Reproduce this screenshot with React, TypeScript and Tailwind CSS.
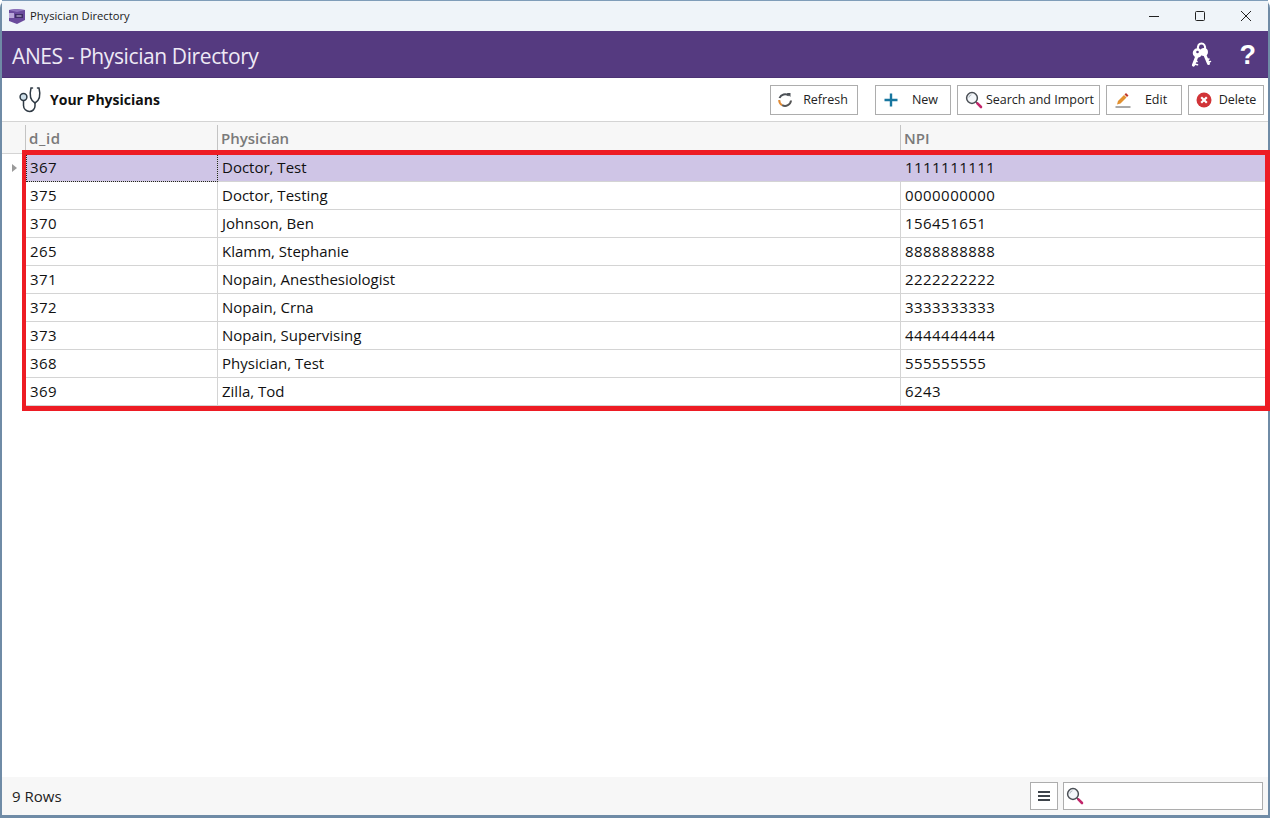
import React from "react";

const rows = [
  ["367", "Doctor, Test", "1111111111"],
  ["375", "Doctor, Testing", "0000000000"],
  ["370", "Johnson, Ben", "156451651"],
  ["265", "Klamm, Stephanie", "8888888888"],
  ["371", "Nopain, Anesthesiologist", "2222222222"],
  ["372", "Nopain, Crna", "3333333333"],
  ["373", "Nopain, Supervising", "4444444444"],
  ["368", "Physician, Test", "555555555"],
  ["369", "Zilla, Tod", "6243"],
];

function Lens({ size = 18 }: { size?: number }) {
  return (
    <svg width={size} height={size} viewBox="0 0 18 18" fill="none">
      <circle cx="7" cy="7" r="5.4" stroke="#4a4f55" strokeWidth="1.5" fill="#f4f7fa" />
      <path d="M3.8 6.5A3.4 3.4 0 0 1 6.4 3.8" stroke="#a9b2ba" strokeWidth="1" />
      <path d="M11 11l1.2 1.2" stroke="#4a4f55" strokeWidth="1.6" />
      <path d="M12.4 12.4l3.6 3.6" stroke="#c2276b" strokeWidth="2.6" strokeLinecap="round" />
    </svg>
  );
}

function Btn({ w, gap, icon, label }: { w: string; gap: string; icon: React.ReactNode; label: string }) {
  return (
    <div className={`h-[30px] ${w} ${gap} border border-[#adadad] bg-white flex items-center justify-center text-[12.5px] text-[#222] shrink-0`}>
      {icon}
      <span className="pt-[1px]">{label}</span>
    </div>
  );
}

export default function App() {
  return (
    <div
      className="relative w-[1270px] h-[818px] overflow-hidden text-black"
      style={{ fontFamily: '"Open Sans", "Noto Sans", sans-serif' }}
    >
      <div className="w-full h-full bg-white flex flex-col border-l-2 border-r-2 border-b-[3px] border-[#6f8ba6] rounded-t-lg">
        {/* title bar */}
        <div className="h-[31px] shrink-0 bg-[#eff4f9] border-t border-[#7f9db9] flex items-center">
          <svg width="18" height="18" viewBox="0 0 18 18" className="ml-[6px]">
            <path d="M1 3l7-1 9 1v10l-8 4-8-3z" fill="#6a4a9c" />
            <path d="M1 3l7-1 9 1-8 2z" fill="#8f74bd" />
            <path d="M1 6h5v5H1z" fill="#b9a6d8" />
            <path d="M7 7h8v4H7z" fill="#3f2c66" />
            <path d="M8.500 8.500h5v1h-5z" fill="#d9d0ea" />
          </svg>
          <span className="ml-[4px] text-[11.2px] text-[#1a1a1a]">Physician Directory</span>
          <div className="ml-auto flex items-center">
            <div className="w-[46px] flex justify-center">
              <svg width="12" height="12" viewBox="0 0 12 12"><path d="M1 6.500h10" stroke="#222" strokeWidth="1" /></svg>
            </div>
            <div className="w-[46px] flex justify-center">
              <svg width="12" height="12" viewBox="0 0 12 12"><rect x="1.500" y="1.500" width="9" height="9" rx="1" fill="none" stroke="#222" strokeWidth="1" /></svg>
            </div>
            <div className="w-[45px] flex justify-center">
              <svg width="12" height="12" viewBox="0 0 12 12"><path d="M1 1l10 10M11 1L1 11" stroke="#222" strokeWidth="1" /></svg>
            </div>
          </div>
        </div>

        {/* header */}
        <div className="h-[47px] shrink-0 bg-[#553a80] flex items-center pl-[10px] pr-[12px] border-b border-[#4c3374]">
          <span className="text-[21px] text-[#eee9f5] tracking-[-0.4px] pt-[6px]">ANES - Physician Directory</span>
          <div className="ml-auto flex items-center gap-[28px] pt-[2px]">
            <svg width="22" height="26" viewBox="0 0 22 26" fill="none" stroke="#fff" strokeLinecap="round" strokeLinejoin="round">
              <path d="M8 8C7.500 3 9 1.500 11.500 1.500S15.500 3.500 15 7" strokeWidth="2" />
              <circle cx="14" cy="10" r="3.200" fill="#fff" strokeWidth="1.500" />
              <path d="M14.500 12l4 9.500" strokeWidth="3" />
              <path d="M18.500 20l2-.5M17.500 17.500l1.500-.5" strokeWidth="1.500" />
              <circle cx="7.500" cy="11" r="4" fill="#fff" strokeWidth="1.500" />
              <circle cx="7.500" cy="10" r="1.300" fill="#553a80" stroke="none" />
              <path d="M7 14L3.500 23" strokeWidth="3.200" />
              <path d="M4 22l3.500.8M5 19l2 .6" strokeWidth="1.600" />
            </svg>
            <span className="text-[27px] font-bold leading-none text-white" style={{ fontFamily: '"Liberation Sans", sans-serif' }}>?</span>
          </div>
        </div>

        {/* toolbar */}
        <div className="h-[44px] shrink-0 bg-white border-b border-[#d4d4d4] flex items-center pl-[17px] pr-[4px]">
          <svg width="24" height="28" viewBox="0 0 24 28" fill="none" stroke="#2f3a44" strokeWidth="1.500" strokeLinecap="round">
            <path d="M13.500 2h-1.500C10.500 8 10.500 14 16 17C21.500 14 21.500 8 20 2h-1.500" />
            <path d="M16 17v3c0 3-2.500 5.500-5.500 5.500S4.500 23 4.500 19.500V15" />
            <circle cx="4.500" cy="11" r="3.400" fill="#cfe0ea" />
          </svg>
          <span className="ml-[7px] text-[14px] font-bold text-[#111]">Your Physicians</span>
          <div className="ml-auto flex items-center">
            <Btn w="w-[88px] pr-[3px]" gap="gap-[10px]" label="Refresh" icon={
              <svg width="16" height="16" viewBox="0 0 16 16" fill="none" strokeWidth="2">
                <path d="M11.900 3.600A6 6 0 0 0 2.500 6" stroke="#4b5056" />
                <path d="M2.200 8a6 6 0 0 0 3 5.200" stroke="#e08a35" />
                <path d="M5.200 13.200A6 6 0 0 0 14 8.500" stroke="#555" />
                <path d="M9.500 1l4 0 0 4z" fill="#4b5056" stroke="none" />
              </svg>
            } />
            <div className="w-[17px]" />
            <Btn w="w-[76px] pr-[4px]" gap="gap-[14px]" label="New" icon={
              <svg width="14" height="14" viewBox="0 0 14 14"><path d="M7 0.500v13M0.500 7h13" stroke="#17769f" strokeWidth="2.400" /></svg>
            } />
            <div className="w-[6px]" />
            <Btn w="w-[143px] pl-[2px]" gap="gap-[3px]" label="Search and Import" icon={<Lens />} />
            <div className="w-[6px]" />
            <Btn w="w-[76px] pr-[6px]" gap="gap-[14px]" label="Edit" icon={
              <svg width="16" height="16" viewBox="0 0 16 16">
                <path d="M3 9l6-6 2.500 2.500-6 6L2 12.500z" fill="#e3912f" />
                <path d="M9.500 2.500l1.500-1.500 2.500 2.500L12 5z" fill="#c0392b" />
                <path d="M0.500 15h15" stroke="#555" strokeWidth="1" />
              </svg>
            } />
            <div className="w-[6px]" />
            <Btn w="w-[76px]" gap="gap-[7px]" label="Delete" icon={
              <svg width="16" height="16" viewBox="0 0 16 16">
                <circle cx="8" cy="8" r="7.500" fill="#d13438" />
                <path d="M5.200 5.200l5.600 5.600M10.800 5.200l-5.600 5.600" stroke="#fff" strokeWidth="2.200" />
              </svg>
            } />
          </div>
        </div>

        {/* grid */}
        <div className="flex-1 flex flex-col min-h-0 bg-white">
          <div className="h-[32px] shrink-0 flex bg-[#f7f7f7] border-b border-[#d4d4d4] text-[15px] text-[#7a7a7a] font-semibold">
            <div className="w-[24px] shrink-0 flex justify-end"><div className="w-px mt-[3px] bg-[#c4c4c4]" /></div>
            <div className="w-[192px] shrink-0 flex"><div className="flex-1 pl-[3px] pt-[1px] flex items-center tracking-[0.6px]">d_id</div><div className="w-px mt-[3px] bg-[#c4c4c4]" /></div>
            <div className="w-[683px] shrink-0 flex"><div className="flex-1 pl-[3px] pt-[1px] flex items-center">Physician</div><div className="w-px mt-[3px] bg-[#c4c4c4]" /></div>
            <div className="flex-1 pl-[3px] pt-[1px] flex items-center">NPI</div>
          </div>
          {rows.map((r, i) => (
            <div key={r[0]} className="h-[28px] shrink-0 flex text-[15px] text-[#111]">
              <div className="w-[24px] shrink-0 border-r border-[#d4d4d4] flex items-center justify-end pr-[8px] bg-white">
                {i === 0 && (
                  <svg width="5" height="8" viewBox="0 0 5 8"><path d="M0 0l5 4-5 4z" fill="#9a9a9a" /></svg>
                )}
              </div>
              <div className={`w-[192px] shrink-0 border-r border-b border-[#d4d4d4] pl-[4px] flex items-center tracking-[0.45px] ${i === 0 ? "bg-[#cfc5e6] outline outline-1 -outline-offset-1 outline-dotted outline-[#222]" : ""}`}>{r[0]}</div>
              <div className={`w-[683px] shrink-0 border-r border-b border-[#d4d4d4] pl-[4px] flex items-center ${i === 0 ? "bg-[#cfc5e6] border-r-[#cfc5e6]" : ""}`}>{r[1]}</div>
              <div className={`flex-1 pl-[4px] border-b border-[#d4d4d4] flex items-center tracking-[0.45px] ${i === 0 ? "bg-[#cfc5e6]" : ""}`}>{r[2]}</div>
            </div>
          ))}
        </div>

        {/* status */}
        <div className="h-[38px] shrink-0 bg-[#f7f7f7] flex items-center pl-[10px] pr-[5px] text-[15px] text-[#222]">
          <span>9 Rows</span>
          <div className="ml-auto flex items-center gap-[5px]">
            <div className="w-[28px] h-[28px] border border-[#adadad] bg-white flex items-center justify-center">
              <svg width="12" height="10" viewBox="0 0 12 10"><path d="M0 1h12M0 5h12M0 9h12" stroke="#3d434a" strokeWidth="2" /></svg>
            </div>
            <div className="w-[200px] h-[28px] border border-[#adadad] bg-white flex items-center pl-[2px]">
              <Lens />
            </div>
          </div>
        </div>
      </div>

      {/* annotation */}
      <div className="absolute left-[22px] top-[150px] w-[1248px] h-[261px] border-[5px] border-l-[4px] border-[#ed1c24] pointer-events-none" />
    </div>
  );
}
